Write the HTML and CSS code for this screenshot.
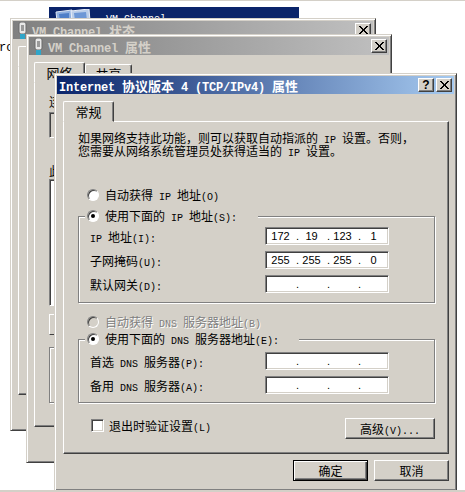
FILE: index.html
```html
<!DOCTYPE html>
<html lang="zh-CN">
<head>
    <meta charset="UTF-8">
    <meta name="viewport" content="width=device-width, initial-scale=1.0">
    <title>Internet 协议版本 4 (TCP/IPv4) 属性</title>
    <link rel="stylesheet" href="styles.css">
</head>
<body>

    <div class="desktop">
        <div class="stray">ro:</div>

        <!-- Explorer window behind everything -->
        <div class="folder">
            <svg class="folder-icon" width="36" height="12" viewBox="0 0 36 12">
                <path d="M1 3 L17 1 L17 12 L2 12 Z" fill="#8fb0e0" stroke="#dfe8f5"/>
                <path d="M4 5 L14 4 L14 12 L5 12 Z" fill="#4f7fc8"/>
                <path d="M16 2 L34 0 L35 12 L17 12 Z" fill="#b9cdea" stroke="#e8eef8"/>
                <path d="M19 4 L31 3 L32 12 L20 12 Z" fill="#6d97d6"/>
            </svg>
            <span class="folder-name">VM Channel</span>
        </div>

        <!-- Status dialog -->
        <div class="window window-status">
            <div class="titlebar inactive">
                <svg class="nic-icon" width="9" height="17" viewBox="0 0 9 17">
                    <rect x="1" y="0" width="7" height="12" rx="2" fill="#e8e8e8" stroke="#6a6a6a"/>
                    <rect x="3" y="3" width="3" height="6" fill="#9a9a9a"/>
                    <rect x="2" y="12" width="5" height="5" fill="#2fa5c9"/>
                </svg>
                <span class="title-text"><span class="en">VM Channel </span>状态</span>
                <button class="cap-btn"><svg width="10" height="9" viewBox="0 0 10 9"><path d="M1 0 L9 8 M2 0 L10 8 M9 0 L1 8 M10 0 L2 8" stroke="#000" fill="none"/></svg></button>
            </div>
            <div class="back-body">
                <div class="back-tabs">
                    <div class="tab back-tab"></div>
                </div>
                <div class="panel panel-status"></div>
            </div>
        </div>

        <!-- Properties dialog -->
        <div class="window window-props">
            <div class="titlebar inactive">
                <svg class="nic-icon" width="9" height="17" viewBox="0 0 9 17">
                    <rect x="1" y="0" width="7" height="12" rx="2" fill="#e8e8e8" stroke="#6a6a6a"/>
                    <rect x="3" y="3" width="3" height="6" fill="#9a9a9a"/>
                    <rect x="2" y="12" width="5" height="5" fill="#2fa5c9"/>
                </svg>
                <span class="title-text"><span class="en">VM Channel </span>属性</span>
                <button class="cap-btn"><svg width="10" height="9" viewBox="0 0 10 9"><path d="M1 0 L9 8 M2 0 L10 8 M9 0 L1 8 M10 0 L2 8" stroke="#000" fill="none"/></svg></button>
            </div>
            <div class="back-body">
                <div class="back-tabs">
                    <div class="tab tab-net">网络</div>
                    <div class="tab tab-share">共享</div>
                </div>
                <div class="panel panel-props">
                    <div class="stub-text">连</div>
                    <div class="stub stub-sunken stub-device"></div>
                    <div class="stub-text stub-text-list">此</div>
                    <div class="stub stub-sunken stub-list"></div>
                    <div class="stub stub-raised"></div>
                    <div class="stub stub-group"></div>
                </div>
            </div>
        </div>

        <!-- Main dialog -->
        <div class="window window-main">
            <div class="titlebar active">
                <span class="title-text title-main"><span class="en">Internet </span>协议版本<span class="en"> 4 (TCP/IPv4) </span>属性</span>
                <button class="cap-btn cap-help">?</button>
                <button class="cap-btn cap-close"><svg width="10" height="9" viewBox="0 0 10 9"><path d="M1 0 L9 8 M2 0 L10 8 M9 0 L1 8 M10 0 L2 8" stroke="#000" fill="none"/></svg></button>
            </div>

            <div class="body">
                <div class="tab tab-general">常规</div>
                <div class="panel panel-main">
                    <p class="intro">如果网络支持此功能，则可以获取自动指派的<span class="lat"> IP </span>设置。否则，<br>您需要从网络系统管理员处获得适当的<span class="lat"> IP </span>设置。</p>

                    <div class="radio-row first">
                        <span class="radio"></span>
                        <span>自动获得<span class="lat"> IP </span>地址<span class="lat">(O)</span></span>
                    </div>

                    <fieldset class="group group-ip">
                        <legend class="radio-row">
                            <span class="radio on"></span>
                            <span>使用下面的<span class="lat"> IP </span>地址<span class="lat">(S):</span></span>
                        </legend>
                        <div class="field-row">
                            <label><span class="lat">IP </span>地址<span class="lat">(I):</span></label>
                            <div class="ip-box">
                                <span class="oct">172</span><span class="dot">.</span><span class="oct">19</span><span class="dot">.</span><span class="oct">123</span><span class="dot">.</span><span class="oct">1</span>
                            </div>
                        </div>
                        <div class="field-row">
                            <label>子网掩码<span class="lat">(U):</span></label>
                            <div class="ip-box">
                                <span class="oct">255</span><span class="dot">.</span><span class="oct">255</span><span class="dot">.</span><span class="oct">255</span><span class="dot">.</span><span class="oct">0</span>
                            </div>
                        </div>
                        <div class="field-row">
                            <label>默认网关<span class="lat">(D):</span></label>
                            <div class="ip-box">
                                <span class="oct"></span><span class="dot">.</span><span class="oct"></span><span class="dot">.</span><span class="oct"></span><span class="dot">.</span><span class="oct"></span>
                            </div>
                        </div>
                    </fieldset>

                    <div class="radio-row disabled">
                        <span class="radio"></span>
                        <span>自动获得<span class="lat"> DNS </span>服务器地址<span class="lat">(B)</span></span>
                    </div>

                    <fieldset class="group group-dns">
                        <legend class="radio-row">
                            <span class="radio on"></span>
                            <span>使用下面的<span class="lat"> DNS </span>服务器地址<span class="lat">(E):</span></span>
                        </legend>
                        <div class="field-row">
                            <label>首选<span class="lat"> DNS </span>服务器<span class="lat">(P):</span></label>
                            <div class="ip-box">
                                <span class="oct"></span><span class="dot">.</span><span class="oct"></span><span class="dot">.</span><span class="oct"></span><span class="dot">.</span><span class="oct"></span>
                            </div>
                        </div>
                        <div class="field-row">
                            <label>备用<span class="lat"> DNS </span>服务器<span class="lat">(A):</span></label>
                            <div class="ip-box">
                                <span class="oct"></span><span class="dot">.</span><span class="oct"></span><span class="dot">.</span><span class="oct"></span><span class="dot">.</span><span class="oct"></span>
                            </div>
                        </div>
                    </fieldset>

                    <div class="check-row">
                        <span class="check"></span>
                        <span class="check-label">退出时验证设置<span class="lat">(L)</span></span>
                        <button class="btn btn-advanced">高级<span class="lat">(V)...</span></button>
                    </div>
                </div>

                <div class="footer">
                    <button class="btn btn-default">确定</button>
                    <button class="btn">取消</button>
                </div>
            </div>
        </div>
    </div>

</body>
</html>
```

FILE: styles.css
```css
/* Global Style */
* {
    margin: 0;
    padding: 0;
    box-sizing: border-box;
}
body {
    background: #fff;
    color: #000;
    font-family: "Noto Sans CJK SC", sans-serif;
    font-size: 12px;
}
.lat {
    font-family: "Liberation Mono", "Noto Sans CJK SC", monospace;
    font-size: 10px;
    line-height: 0;
    white-space: pre;
}
.en {
    font-family: "Liberation Mono", "Noto Sans CJK SC", monospace;
    font-size: 12px;
    letter-spacing: -0.2px;
    line-height: 0;
    white-space: pre;
}

/* Desktop */
.desktop {
    position: relative;
    width: 465px;
    height: 492px;
    overflow: hidden;
    background: #fff;
    border-top: 1px solid #d4d0c8;
    border-bottom: 2px solid #d4d0c8;
}
.stray {
    position: absolute;
    left: -1px;
    top: 40px;
    font-family: "Liberation Mono", monospace;
    font-size: 12px;
    line-height: 14px;
}
.folder {
    position: absolute;
    left: 49px;
    top: 6px;
    width: 250px;
    height: 14px;
    background: #0a246a;
    color: #fff;
    display: flex;
    align-items: flex-start;
}
.folder-icon {
    margin: 2px 0 0 6px;
}
.folder-name {
    margin: 6px 0 0 15px;
    font-family: "Liberation Mono", monospace;
    font-size: 10px;
    line-height: 14px;
}

/* Windows */
.window {
    position: absolute;
    isolation: isolate;
    background: #d4d0c8;
    border: 1px solid;
    border-color: #d4d0c8 #404040 #404040 #d4d0c8;
    box-shadow: inset 1px 1px 0 #fff, inset -1px -1px 0 #808080;
    padding: 2px;
}
.window-status {
    left: 10px;
    top: 17px;
    width: 366px;
    height: 413px;
}
.window-props {
    left: 26px;
    top: 33px;
    width: 366px;
    height: 429px;
}
.window-main {
    left: 54px;
    top: 72px;
    width: 403px;
    height: 418px;
}
.titlebar {
    display: flex;
    align-items: center;
    height: 18px;
    padding: 0 2px;
    font-weight: bold;
    font-size: 13px;
}
.titlebar.inactive {
    background: linear-gradient(to right, #808080, #c0c0c0);
    color: #d4d0c8;
}
.titlebar.active {
    background: linear-gradient(to right, #0a246a, #a6caf0);
    color: #fff;
}
.nic-icon {
    margin: 0 5px 0 3px;
}
.title-text {
    flex: 1;
    white-space: nowrap;
}
.cap-btn {
    width: 16px;
    height: 14px;
    background: #d4d0c8;
    border: 1px solid;
    border-color: #fff #404040 #404040 #fff;
    box-shadow: inset -1px -1px 0 #808080;
    display: flex;
    align-items: center;
    justify-content: center;
    font-family: "Liberation Sans", sans-serif;
    font-size: 12px;
    font-weight: bold;
    color: #000;
}
.cap-close {
    margin-left: 2px;
}

/* Tabs + panels */
.tab {
    position: relative;
    z-index: 1;
    background: #d4d0c8;
    border: 1px solid;
    border-color: #fff #404040 #d4d0c8 #fff;
    border-radius: 2px 2px 0 0;
    box-shadow: inset -1px 0 0 #808080;
    text-align: center;
}
.panel {
    background: #d4d0c8;
    border: 1px solid;
    border-color: #fff #404040 #404040 #fff;
    box-shadow: inset -1px -1px 0 #808080;
}
.body {
    padding: 7px 5px 0 6px;
}
.tab-general {
    width: 51px;
    height: 21px;
    line-height: 20px;
    font-size: 13px;
    margin-bottom: -1px;
}
.panel-main {
    height: 333px;
    padding: 9px 0 0 14px;
}

/* Windows behind */
.back-body {
    padding: 7px 6px 0 5px;
}
.back-tabs {
    display: flex;
    align-items: flex-end;
    margin-bottom: -1px;
}
.back-tab {
    width: 50px;
    height: 21px;
}
.panel-status {
    height: 329px;
}
.tab-net {
    width: 51px;
    height: 21px;
    line-height: 20px;
    font-size: 13px;
}
.tab-share {
    width: 47px;
    height: 19px;
    line-height: 18px;
    font-size: 13px;
}
.panel-props {
    height: 345px;
    padding: 11px 0 0 14px;
}
.stub-text {
    height: 18px;
    line-height: 16px;
}
.stub-text-list {
    margin-top: 25px;
}
.stub {
    width: 320px;
    border: 1px solid;
}
.stub-sunken {
    border-color: #808080 #fff #fff #808080;
    box-shadow: inset 1px 1px 0 #404040;
}
.stub-device {
    height: 26px;
}
.stub-list {
    height: 127px;
    margin-top: -2px;
    background: #fff;
}
.stub-raised {
    height: 21px;
    margin-top: 8px;
    border-color: #fff #404040 #404040 #fff;
}
.stub-group {
    height: 56px;
    margin-top: 12px;
    border-color: #808080;
    box-shadow: inset 1px 1px 0 #fff, 1px 1px 0 #fff;
}

/* Form */
.intro {
    font-size: 12px;
    line-height: 13px;
    white-space: nowrap;
}
.radio-row {
    display: flex;
    align-items: center;
    gap: 6px;
    height: 16px;
    line-height: 16px;
    padding-left: 9px;
    white-space: nowrap;
}
.radio-row.first {
    margin-top: 30px;
}
.radio-row.disabled {
    margin-top: 11px;
    color: #808080;
    text-shadow: 1px 1px 0 #fff;
}
.radio {
    position: relative;
    flex: none;
    width: 12px;
    height: 12px;
    border-radius: 50%;
    background: #fff;
    border: 1px solid;
    border-color: #808080 #fff #fff #808080;
    box-shadow: inset 1px 1px 0 #404040;
}
.radio-row.disabled .radio {
    background: #d4d0c8;
}
.radio.on::after {
    content: "";
    position: absolute;
    left: 3px;
    top: 3px;
    width: 4px;
    height: 4px;
    border-radius: 50%;
    background: #000;
}
.group {
    width: 357px;
    border: 1px solid #808080;
    box-shadow: 1px 1px 0 #fff, inset 1px 1px 0 #fff;
    padding: 3px 0 9px 11px;
}
.group legend {
    margin-left: -5px;
    padding: 0 0 0 2px;
    background: #d4d0c8;
}
.group-ip {
    margin-top: 5px;
}
.group-ip legend {
    width: 173px;
}
.group-dns {
    margin-top: 1px;
    padding-top: 5px;
    padding-bottom: 8px;
}
.group-dns legend {
    width: 214px;
}
.field-row {
    display: flex;
    align-items: center;
    height: 18px;
    margin-bottom: 6px;
}
.field-row:last-child {
    margin-bottom: 0;
}
.field-row label {
    width: 175px;
    white-space: nowrap;
}
.ip-box {
    display: flex;
    align-items: center;
    width: 124px;
    height: 18px;
    padding-left: 3px;
    background: #fff;
    border: 1px solid;
    border-color: #808080 #fff #fff #808080;
    box-shadow: inset 1px 1px 0 #404040, inset -1px -1px 0 #d4d0c8;
    font-family: "Liberation Sans", sans-serif;
    font-size: 11px;
}
.oct {
    width: 23px;
    text-align: center;
}
.dot {
    width: 8px;
    padding-left: 4px;
}
.check-row {
    display: flex;
    align-items: center;
    width: 357px;
    height: 21px;
    margin-top: 15px;
    padding-left: 13px;
}
.check {
    flex: none;
    width: 13px;
    height: 13px;
    margin-bottom: 6px;
    background: #fff;
    border: 1px solid;
    border-color: #808080 #fff #fff #808080;
    box-shadow: inset 1px 1px 0 #404040, inset -1px -1px 0 #d4d0c8;
}
.check-label {
    flex: 1;
    margin: 0 0 6px 5px;
    white-space: nowrap;
}

/* Buttons */
.btn {
    width: 75px;
    height: 21px;
    background: #d4d0c8;
    border: 1px solid;
    border-color: #fff #404040 #404040 #fff;
    box-shadow: inset -1px -1px 0 #808080;
    font-family: "Noto Sans CJK SC", sans-serif;
    font-size: 12px;
    color: #000;
}
.btn-advanced {
    width: 90px;
}
.btn-default {
    border-color: #000;
    box-shadow: inset 1px 1px 0 #fff, inset -1px -1px 0 #404040, inset -2px -2px 0 #808080;
}
.footer {
    display: flex;
    justify-content: flex-end;
    gap: 6px;
    margin-top: 6px;
}
```
